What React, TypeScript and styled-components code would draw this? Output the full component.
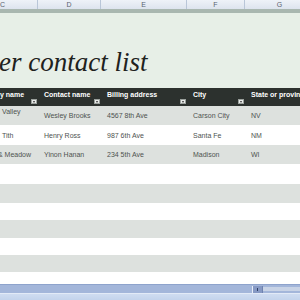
import React from 'react';
import styled, { createGlobalStyle } from 'styled-components';

const GlobalStyle = createGlobalStyle`
  html, body {
    margin: 0;
    padding: 0;
    background: #ffffff;
  }
  body {
    width: 300px;
    height: 300px;
    overflow: hidden;
    font-family: "Liberation Sans", Arial, sans-serif;
  }
`;

const Sheet = styled.div`
  width: 300px;
  height: 300px;
  overflow: hidden;
  display: flex;
  flex-direction: column;
`;

// the grid is scrolled right; column C starts off screen
const Scroller = styled.div`
  margin-left: -32px;
  width: 347px;
`;

const COLS = '70px 63px 86px 58px 70px';

const ColHeads = styled.div`
  display: grid;
  grid-template-columns: ${COLS};
  height: 9px;
  background: linear-gradient(#eef2f8, #dde4ee);
`;

const ColHead = styled.div`
  border-right: 1px solid #b9c6d8;
  color: #5a6270;
  font-size: 7px;
  line-height: 9px;
  text-align: center;
`;

const Strip = styled.div`
  height: 4px;
  background: #a9b7b0;
`;

const TitleBand = styled.div`
  height: 75px;
  background: #e7efe7;
  display: flex;
  align-items: flex-end;
  padding-bottom: 12px;
  box-sizing: border-box;
`;

const Title = styled.h1`
  margin: 0 0 0 31px;
  font-family: "Liberation Serif", "Times New Roman", serif;
  font-style: italic;
  font-weight: normal;
  font-size: 27px;
  line-height: 27px;
  color: #1e2220;
  white-space: nowrap;
`;

const HeadRow = styled.div`
  display: grid;
  grid-template-columns: ${COLS};
  height: 18px;
  background: #2c312e;
`;

const HeadCell = styled.div`
  position: relative;
  padding: 3px 0 0 6px;
  color: #ffffff;
  font-size: 7px;
  font-weight: bold;
  line-height: 8px;
  white-space: nowrap;
  overflow: hidden;
`;

const Filter = styled.span`
  position: absolute;
  right: 1px;
  bottom: 2px;
  width: 6px;
  height: 5px;
  background: #e8ebe9;
  border: 1px solid #9aa09c;
  box-sizing: border-box;
  &::after {
    content: '';
    position: absolute;
    left: 1px;
    top: 1px;
    border-left: 1.5px solid transparent;
    border-right: 1.5px solid transparent;
    border-top: 2px solid #333;
  }
`;

const Row = styled.div<{ shade?: boolean; h: number }>`
  display: grid;
  grid-template-columns: ${COLS};
  height: ${p => p.h}px;
  background: ${p => (p.shade ? '#dde1de' : '#ffffff')};
`;

const Cell = styled.div<{ top?: boolean }>`
  display: flex;
  align-items: ${p => (p.top ? 'flex-start' : 'center')};
  padding: ${p => (p.top ? '2px 0 0 6px' : '0 0 0 6px')};
  color: #4e5350;
  font-size: 7px;
  white-space: nowrap;
  overflow: hidden;
`;

const HScroll = styled.div`
  height: 8px;
  background: #a3b6da;
  border-top: 1px solid #8ea3cc;
  display: flex;
  align-items: center;
`;

const Track = styled.div`
  flex: 0 0 252px;
`;

const Thumb = styled.div`
  flex: 0 0 11px;
  height: 7px;
  background: #8699c4;
  border-left: 1px solid #e8eef8;
  border-right: 1px solid #6f83b0;
  box-sizing: border-box;
  display: flex;
  align-items: center;
  justify-content: center;
  &::after {
    content: '';
    width: 1px;
    height: 3px;
    background: #2f3f66;
  }
`;

const TrackRest = styled.div`
  flex: 1;
  height: 4px;
  background: #c8d3e6;
`;

const StatusBar = styled.div`
  flex: 1;
  background: linear-gradient(#cfdcf1, #c3d3ec);
  border-top: 1px solid #e2eaf7;
`;

const headers = ['Company name', 'Contact name', 'Billing address', 'City', 'State or province'];

const data = [
  ['Valley', 'Wesley Brooks', '4567 8th Ave', 'Carson City', 'NV'],
  ['Tith', 'Henry Ross', '987 6th Ave', 'Santa Fe', 'NM'],
  ['& Meadow', 'Yinon Hanan', '234 5th Ave', 'Madison', 'WI'],
];

const emptyHeights = [20, 19, 17, 18, 17, 17, 12];

export default function App() {
  return (
    <Sheet>
      <GlobalStyle />
      <Scroller>
        <ColHeads>
          {['C', 'D', 'E', 'F', 'G'].map(c => (
            <ColHead key={c}>{c}</ColHead>
          ))}
        </ColHeads>
        <Strip />
        <TitleBand>
          <Title>er contact list</Title>
        </TitleBand>
        <HeadRow>
          {headers.map((h, i) => (
            <HeadCell key={h} style={i === 0 ? { paddingLeft: 32 } : undefined}>
              {i === 0 ? 'y name' : h}
              {i < 4 && <Filter />}
            </HeadCell>
          ))}
        </HeadRow>
        {data.map((r, ri) => (
          <Row key={ri} shade={ri % 2 === 0} h={ri === 1 ? 20 : 19}>
            {r.map((v, ci) => (
              <Cell
                key={ci}
                top={ri === 0 && ci === 0}
                style={ci === 0 ? { paddingLeft: ri === 2 ? 30 : 34 } : undefined}
              >
                {v}
              </Cell>
            ))}
          </Row>
        ))}
        {emptyHeights.map((h, i) => (
          <Row key={'e' + i} shade={i % 2 === 1} h={h}>
            {[0, 1, 2, 3, 4].map(c => (
              <Cell key={c} />
            ))}
          </Row>
        ))}
      </Scroller>
      <HScroll>
        <Track />
        <Thumb />
        <TrackRest />
      </HScroll>
      <StatusBar />
    </Sheet>
  );
}
